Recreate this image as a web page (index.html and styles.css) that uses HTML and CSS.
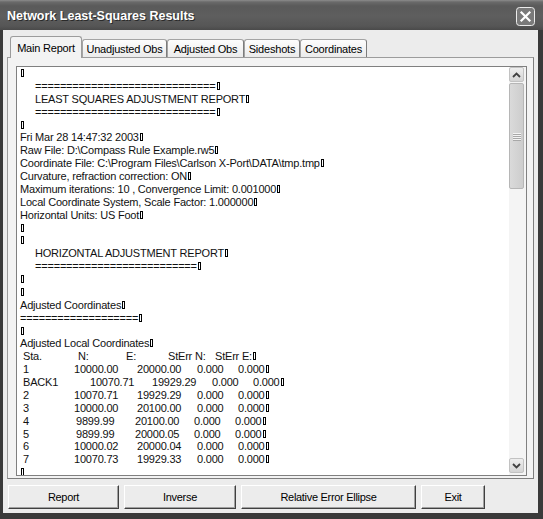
FILE: index.html
```html
<!DOCTYPE html>
<html>
<head>
<meta charset="utf-8">
<link rel="stylesheet" href="styles.css">
</head>
<body>
<div class="window">
  <div class="titlebar">
    <span class="title">Network Least-Squares Results</span>
    <span class="close">
      <svg width="19" height="19" viewBox="0 0 19 19">
        <rect x="0.5" y="0.5" width="18" height="18" rx="3" fill="#7a7a7a" stroke="#ececec"/>
        <path d="M5.5 5.5 L13.5 13.5 M13.5 5.5 L5.5 13.5" stroke="#fff" stroke-width="2.2" stroke-linecap="square"/>
      </svg>
    </span>
  </div>
  <div class="client">
    <div class="tabs">
      <div class="tab tab-active w-main">Main Report</div>
      <div class="tab w-unadj">Unadjusted Obs</div>
      <div class="tab w-adj">Adjusted Obs</div>
      <div class="tab w-side">Sideshots</div>
      <div class="tab w-coord">Coordinates</div>
    </div>
    <div class="panel">
      <div class="textbox">
        <div class="report">
          <div class="ln"><i class="nul"></i></div>
          <div class="ln ind">=============================<i class="nul"></i></div>
          <div class="ln ind">LEAST SQUARES ADJUSTMENT REPORT<i class="nul"></i></div>
          <div class="ln ind">=============================<i class="nul"></i></div>
          <div class="ln"><i class="nul"></i></div>
          <div class="ln">Fri Mar 28 14:47:32 2003<i class="nul"></i></div>
          <div class="ln">Raw File: D:\Compass Rule Example.rw5<i class="nul"></i></div>
          <div class="ln">Coordinate File: C:\Program Files\Carlson X-Port\DATA\tmp.tmp<i class="nul"></i></div>
          <div class="ln">Curvature, refraction correction: ON<i class="nul"></i></div>
          <div class="ln">Maximum iterations: 10 , Convergence Limit: 0.001000<i class="nul"></i></div>
          <div class="ln">Local Coordinate System, Scale Factor: 1.000000<i class="nul"></i></div>
          <div class="ln">Horizontal Units: US Foot<i class="nul"></i></div>
          <div class="ln"><i class="nul"></i></div>
          <div class="ln"><i class="nul"></i></div>
          <div class="ln ind">HORIZONTAL ADJUSTMENT REPORT<i class="nul"></i></div>
          <div class="ln ind">==========================<i class="nul"></i></div>
          <div class="ln"><i class="nul"></i></div>
          <div class="ln"><i class="nul"></i></div>
          <div class="ln">Adjusted Coordinates<i class="nul"></i></div>
          <div class="ln">===================<i class="nul"></i></div>
          <div class="ln"><i class="nul"></i></div>
          <div class="ln">Adjusted Local Coordinates<i class="nul"></i></div>
          <div class="tr hdr"><span>Sta.</span><span>N:</span><span>E:</span><span>StErr N:</span><span>StErr E:<i class="nul"></i></span></div>
          <div class="tr"><span>1</span><span>10000.00</span><span>20000.00</span><span>0.000</span><span>0.000<i class="nul"></i></span></div>
          <div class="tr back"><span>BACK1</span><span>10070.71</span><span>19929.29</span><span>0.000</span><span>0.000<i class="nul"></i></span></div>
          <div class="tr"><span>2</span><span>10070.71</span><span>19929.29</span><span>0.000</span><span>0.000<i class="nul"></i></span></div>
          <div class="tr"><span>3</span><span>10000.00</span><span>20100.00</span><span>0.000</span><span>0.000<i class="nul"></i></span></div>
          <div class="tr nar"><span>4</span><span>9899.99</span><span>20100.00</span><span>0.000</span><span>0.000<i class="nul"></i></span></div>
          <div class="tr nar"><span>5</span><span>9899.99</span><span>20000.05</span><span>0.000</span><span>0.000<i class="nul"></i></span></div>
          <div class="tr"><span>6</span><span>10000.02</span><span>20000.04</span><span>0.000</span><span>0.000<i class="nul"></i></span></div>
          <div class="tr"><span>7</span><span>10070.73</span><span>19929.33</span><span>0.000</span><span>0.000<i class="nul"></i></span></div>
          <div class="ln"><i class="nul"></i></div>
        </div>
        <div class="sb">
          <div class="sb-btn">
            <svg width="9" height="6" viewBox="0 0 9 6"><path d="M1 5 L4.5 1.5 L8 5" fill="none" stroke="#404040" stroke-width="1.8"/></svg>
          </div>
          <div class="thumb">
            <svg width="8" height="9" viewBox="0 0 8 9">
              <path d="M0 1.5 H8 M0 3.5 H8 M0 5.5 H8 M0 7.5 H8" stroke="#f4f4f4" stroke-width="1"/>
              <path d="M0 2.5 H8 M0 4.5 H8 M0 6.5 H8 M0 8.5 H8" stroke="#a8a8a8" stroke-width="1"/>
            </svg>
          </div>
          <div class="sb-btn sb-down">
            <svg width="9" height="6" viewBox="0 0 9 6"><path d="M1 1 L4.5 4.5 L8 1" fill="none" stroke="#404040" stroke-width="1.8"/></svg>
          </div>
        </div>
      </div>
    </div>
    <div class="actions">
      <button class="btn w-report">Report</button>
      <button class="btn w-inverse">Inverse</button>
      <button class="btn w-ellipse">Relative Error Ellipse</button>
      <button class="btn w-exit">Exit</button>
    </div>
  </div>
</div>
</body>
</html>
```
FILE: styles.css
```css
html, body {
  margin: 0;
  padding: 0;
  background: #3a3a3a;
}
.window {
  width: 543px;
  height: 519px;
  background: #3a3a3a;
  overflow: hidden;
  font-family: "Liberation Sans", Arial, sans-serif;
}
.titlebar {
  height: 30px;
  box-sizing: border-box;
  padding: 2px 8px 0 7px;
  display: flex;
  align-items: center;
  justify-content: space-between;
  background: linear-gradient(to bottom, #8c8c8c 0px, #6a6a6a 2px, #5a5a5a 6px, #5e5e5e 16px, #565656 26px, #4a4a4a 30px);
}
.title {
  color: #fff;
  font-weight: bold;
  font-size: 12.5px;
  text-shadow: 1px 1px 0 #2a2a2a;
}
.close {
  display: flex;
  width: 19px;
  height: 19px;
}
.client {
  margin: 0 5px 0 3px;
  height: 483px;
  box-sizing: border-box;
  padding: 6px 4px 0 4px;
  background: #ececec;
}
.tabs {
  display: flex;
  align-items: flex-end;
  height: 21px;
  padding-left: 3px;
}
.tab {
  height: 18px;
  box-sizing: border-box;
  border: 1px solid #a4a4a4;
  border-bottom: none;
  border-right-color: #7c7c7c;
  border-radius: 3px 3px 0 0;
  background: linear-gradient(to bottom, #fdfdfd, #ebebeb);
  font-size: 11px;
  letter-spacing: -0.2px;
  color: #000;
  display: flex;
  align-items: center;
  justify-content: center;
}
.tab-active {
  height: 22px;
  margin-bottom: -1px;
  background: #f3f3f3;
  border-color: #9c9c9c;
  position: relative;
  z-index: 1;
}
.w-main { width: 72px; }
.w-unadj { width: 85px; }
.w-adj { width: 77px; }
.w-side { width: 56px; }
.w-coord { width: 67px; }
.panel {
  width: 527px;
  height: 422px;
  box-sizing: border-box;
  border: 1px solid #9c9c9c;
  border-right-color: #7e7e7e;
  border-bottom-color: #7e7e7e;
  background: #f3f3f3;
  padding: 8px 0 0 8px;
}
.textbox {
  width: 511px;
  height: 410px;
  box-sizing: border-box;
  border: 1px solid #808080;
  background: #fff;
  display: flex;
}
.report {
  flex: 1;
  overflow: hidden;
  padding-left: 3px;
  font-size: 11px;
  line-height: 12.87px;
  letter-spacing: -0.2px;
  white-space: nowrap;
  color: #111;
}
.ind {
  padding-left: 15px;
}
.nul {
  display: inline-block;
  width: 1px;
  height: 6px;
  border: 1px solid #000;
  margin-left: 1px;
}
.tr {
  display: grid;
  grid-template-columns: 51px 63px 60px 41px auto;
  padding-left: 3px;
}
.tr.hdr { grid-template-columns: 55px 48px 42px 47px auto; }
.tr.back { grid-template-columns: 67px 62px 60px 41px auto; }
.tr.nar { grid-template-columns: 53px 59px 59px 41px auto; }
.sb {
  width: 17px;
  flex: none;
  background: #f4f4f4;
  display: flex;
  flex-direction: column;
}
.sb-btn {
  width: 15px;
  height: 15px;
  box-sizing: border-box;
  border: 1px solid #c2c2c2;
  border-radius: 2px;
  background: linear-gradient(to bottom, #eeeeee, #d4d4d4);
  display: flex;
  align-items: center;
  justify-content: center;
}
.sb-down {
  margin-top: auto;
  margin-bottom: 2px;
}
.thumb {
  width: 15px;
  height: 106px;
  margin-top: 1px;
  box-sizing: border-box;
  border: 1px solid #b6b6b6;
  border-radius: 2px;
  background: linear-gradient(to right, #dadada, #cdcdcd);
  display: flex;
  align-items: center;
  justify-content: center;
}
.actions {
  display: flex;
  gap: 5px;
  margin-top: 6px;
  padding-left: 1px;
}
.btn {
  height: 24px;
  box-sizing: border-box;
  padding: 0;
  font-family: "Liberation Sans", Arial, sans-serif;
  font-size: 11px;
  letter-spacing: -0.3px;
  color: #000;
  background: #ececec;
  border: 1px solid;
  border-color: #ffffff #404040 #404040 #ffffff;
  box-shadow: inset -1px -1px 0 #a0a0a0;
}
.w-report { width: 111px; }
.w-inverse { width: 112px; }
.w-ellipse { width: 175px; }
.w-exit { width: 64px; }
```
